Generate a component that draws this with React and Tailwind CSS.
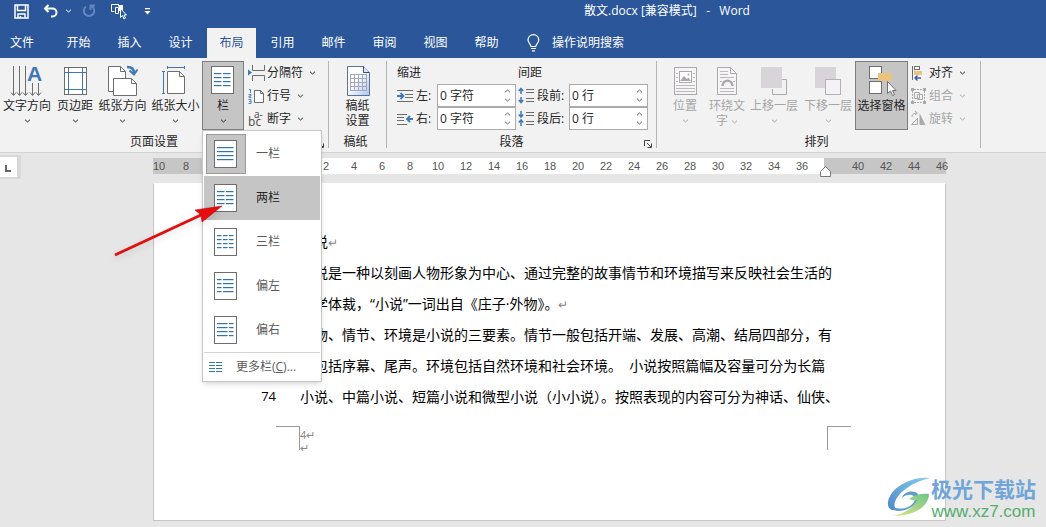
const TABS = ['开始', '插入', '设计', '布局', '引用', '邮件', '审阅', '视图', '帮助'];

const LINES = [
  '小说↵',
  '小说是一种以刻画人物形象为中心、通过完整的故事情节和环境描写来反映社会生活的',
  '文学体裁，“小说”一词出自《庄子·外物》。↵',
  '人物、情节、环境是小说的三要素。情节一般包括开端、发展、高潮、结局四部分，有',
  '时包括序幕、尾声。环境包括自然环境和社会环境。  小说按照篇幅及容量可分为长篇',
  '小说、中篇小说、短篇小说和微型小说（小小说）。按照表现的内容可分为神话、仙侠、',
];

const LAYOUTS = [
  {label: '一栏', cols: [[3, 20]]},
  {label: '两栏', cols: [[3, 11], [12, 20]]},
  {label: '三栏', cols: [[3, 8], [9, 14], [15, 20]]},
  {label: '偏左', cols: [[3, 8], [9, 20]]},
  {label: '偏右', cols: [[3, 14], [15, 20]]},
];

function Chevron({className = ''}) {
  return (
    <svg width="7" height="4" viewBox="0 0 7 4" className={`shrink-0 ${className}`} fill="none" stroke="currentColor">
      <path d="M1 .7 3.5 3 6 .7" />
    </svg>
  );
}

function PageIcon({cols}) {
  return (
    <svg width="24" height="28" viewBox="0 0 24 28" className="shrink-0">
      <rect x=".5" y=".5" width="22" height="27" fill="#fff" stroke="#6d6d6d" />
      {[7, 11, 15, 19].map((y) => cols.map(([a, b]) => (
        <rect key={`${a}-${y}`} x={a} y={y} width={b - a - 0.5} height="1.2" fill="#2e75b6" />
      )))}
    </svg>
  );
}

function Icon({w = 32, h = 32, children}) {
  return (
    <svg width={w} height={h} viewBox={`0 0 ${w} ${h}`} fill="none" stroke="#6d6d6d" className="shrink-0 overflow-visible">
      {children}
    </svg>
  );
}

const TextDirectionIcon = () => (
  <Icon w={34}>
    {[3.5, 9.5, 15.5].map((x) => <path key={x} d={`M${x} 1V30M${x - 2.5} 27.5l2.5 3 2.5-3`} />)}
    {[22.5, 28.5].map((x) => <path key={x} d={`M${x} 18V30M${x - 2.5} 27.5l2.5 3 2.5-3`} />)}
    <text x="17" y="16" fontSize="21" fontWeight="700" fontFamily="Liberation Sans, sans-serif" fill="#3f78b5" stroke="none">A</text>
  </Icon>
);

const MarginsIcon = () => (
  <Icon>
    <rect x="5.5" y="2.5" width="22" height="27" fill="#fff" />
    <path d="M9.5 3v26M23.5 3v26M6 7.5h21M6 24.5h21" stroke="#3f78b5" />
  </Icon>
);

const OrientationIcon = () => (
  <Icon>
    <path d="M1.5 1.5h12l5 5v20h-17z" fill="#fff" />
    <path d="M13.5 1.5v5h5" />
    <path d="M6.5 13.5h18l5 5v12h-23z" fill="#fff" />
    <path d="M24.5 13.5v5h5" />
    <path d="M20 2c5 0 7 2 7 6" stroke="#3f78b5" strokeWidth="2.5" />
    <path d="M22.5 5.5 27 9.5l3.5-5" stroke="#3f78b5" strokeWidth="2" />
  </Icon>
);

const SizeIcon = () => (
  <Icon>
    <path d="M7.5 6.5h12l5 5v17h-17z" fill="#fff" />
    <path d="M19.5 6.5v5h5" />
    <path d="M7 2.5h18M7.5 1v3M24.5 1v3M3.5 6v22M2 6.5h3M2 28.5h3" stroke="#3f78b5" />
  </Icon>
);

const ManuscriptIcon = () => (
  <Icon>
    <defs>
      <linearGradient id="sheet" x1="0" y1="0" x2="1" y2="1">
        <stop offset=".4" stopColor="#fff" />
        <stop offset="1" stopColor="#a9c3ec" />
      </linearGradient>
    </defs>
    <path d="M5.5 1.5h16l6 6v23h-22z" fill="url(#sheet)" stroke="#5d7096" />
    <path d="M21.5 1.5v6h6" fill="#dce7f8" stroke="#38527f" />
    <path
      d="M8 9.500h16M8 13.500h16M8 17.500h16M8 21.500h16M8 25.500h16M8.500 9v17M12.500 9v17M16.500 9v17M20.500 9v17M24.500 9v17"
      stroke="#a3a9ba"
    />
  </Icon>
);

const PositionIcon = () => (
  <Icon>
    <rect x="5.5" y="2.5" width="22" height="27" stroke="#aaa" fill="#f6f4f7" />
    <rect x="10.5" y="6.5" width="12" height="11" stroke="#aaa" fill="#fff" />
    <path d="M11 16l4-5 3 3 1.500-1.500L22 16z" fill="#aaa" stroke="none" />
    <path d="M7 8.500h2M7 12.500h2M7 16.500h2M24 8.500h2M24 12.500h2M24 16.500h2M7 20.500h19M7 23.500h19M7 26.500h19" stroke="#bbb" />
    <circle cx="19.5" cy="9.5" r="1" fill="#aaa" stroke="none" />
  </Icon>
);

const WrapIcon = () => (
  <Icon>
    <path d="M6.5 2.5h13l6 6v21h-19z" stroke="#aaa" fill="#f6f4f7" />
    <path d="M19.5 2.5v6h6" stroke="#aaa" />
    <path d="M9 6.500h8M9 9.500h8M9 12.500h14M9 23.500h14M9 26.500h14M9 16.500h2M22 16.500h2" stroke="#bbb" />
    <path d="M11.5 21c0-7 10-7 10 0" stroke="#aaa" strokeWidth="2.5" />
  </Icon>
);

const ForwardIcon = () => (
  <Icon>
    <path d="M14.5 24v5.500h14v-15H24" stroke="#aaa" />
    <rect x="3" y="2" width="21" height="21" fill="#d9d4d9" stroke="none" />
  </Icon>
);

const BackwardIcon = () => (
  <Icon>
    <rect x="3" y="2" width="21" height="21" fill="#d9d4d9" stroke="none" />
    <rect x="13.5" y="14.5" width="15" height="15" fill="#f6f1f8" stroke="#b5b0b5" />
  </Icon>
);

const SelectionIcon = () => (
  <Icon>
    <rect x="3.5" y="1.5" width="12" height="12" fill="#fff" />
    <rect x="3.5" y="16.5" width="12" height="12" fill="#fff" />
    <rect x="12" y="8" width="14" height="8" fill="#eac47e" stroke="none" />
    <path d="M21.5 16.5v12l3-2.500 2 4.500 2-1-2-4h3.500z" fill="#fff" />
  </Icon>
);

const BreaksIcon = () => (
  <Icon w={17} h={16}>
    <path d="M4.5 0v5.500h12V0M4.500 16v-5.500h12V16" />
    <path d="M0 4.500v6L4 7.500z" fill="#3f78b5" stroke="none" />
  </Icon>
);

const LineNumberIcon = () => (
  <Icon w={17} h={16}>
    <path d="M6.5 2.500h6l3 3v9h-9z" fill="#fff" />
    <path d="M12.5 2.500v3h3" />
    <g fill="#3f78b5" stroke="#3f78b5">
      <path d="M1 1.500h1.500V5M.5 6.500h2.500v1.500H1v1.500h2.500M.5 11.500H3v4H.5M1 13.500h2" fill="none" strokeWidth=".9" />
    </g>
  </Icon>
);

const HyphenIcon = () => (
  <Icon w={17} h={16}>
    <g fontFamily="Noto Sans, sans-serif" fill="#555" stroke="none">
      <text x="0" y="15" fontSize="12">bc</text>
      <text x="6" y="7" fontSize="10">a-</text>
    </g>
  </Icon>
);

const IndentLeftIcon = () => (
  <Icon w={17} h={14}>
    <path d="M0 1.500h16M8 5.500h8M8 8.500h8M0 12.500h16" />
    <path d="M0 7h6M3.500 4l3 3-3 3" stroke="#3f78b5" strokeWidth="1.8" />
  </Icon>
);

const IndentRightIcon = () => (
  <Icon w={17} h={14}>
    <path d="M0 2.500h10M0 5.500h7M0 8.500h7M0 12.500h10" />
    <path d="M10 7h6M13 4l-3 3 3 3" stroke="#3f78b5" strokeWidth="1.8" />
  </Icon>
);

const BeforeIcon = () => (
  <Icon w={17} h={17}>
    <path d="M8 2.500h8M8 5.500h8M8 11.500h8M8 14.500h8" />
    <path d="M3 7V1.500M.8 4 3 1.500 5.200 4M3 10v5.500M.8 13 3 15.500 5.200 13" stroke="#3f78b5" strokeWidth="1.5" />
  </Icon>
);

const AfterIcon = () => (
  <Icon w={17} h={17}>
    <path d="M8 2.500h8M8 5.500h8M8 11.500h8M8 14.500h8" />
    <path d="M3 1v5.500M.8 4.500 3 7l2.200-2.500M3 16v-5.500M.8 12.500 3 10l2.200 2.500" stroke="#3f78b5" strokeWidth="1.5" />
  </Icon>
);

const AlignIcon = () => (
  <Icon w={17} h={16}>
    <path d="M2.5 1v14" />
    <rect x="4.5" y="1.5" width="5" height="3" fill="#fff" />
    <rect x="4" y="6" width="8" height="4" fill="#eac47e" stroke="none" />
    <path d="M5 13h6M7.500 10.500 5 13l2.500 2.500" stroke="#3f5fb5" strokeWidth="1.5" />
  </Icon>
);

const GroupIcon = () => (
  <Icon w={17} h={16}>
    <path d="M2.5 3v10M14.500 3v10M4 1.500h9M4 14.500h9" stroke="#aaa" strokeDasharray="2 1" />
    <path d="M4.5 4.500h5v6h-5zM7.500 6.500h5v5h-5z" stroke="#aaa" />
    <path d="M1 0h3v3H1zM13 0h3v3h-3zM1 13h3v3H1zM13 13h3v3h-3z" fill="#aaa" stroke="none" />
  </Icon>
);

const RotateIcon = () => (
  <Icon w={17} h={16}>
    <path d="M1.5 13.500h6v-6zM2 6c0-3 2-4 5-4M5 0l2.500 2L5 4" stroke="#aaa" />
    <path d="M9.5 2v12h6z" fill="#aaa" stroke="none" />
  </Icon>
);

function BigButton({icon, label, width, arrow = true, disabled, active, children}) {
  return (
    <div className={`relative ${width}`}>
      <button
        disabled={disabled}
        className={`flex h-[69px] w-full flex-col items-center pt-1 leading-[15px] whitespace-nowrap ${
          active ? 'bg-[#c5c5c5] outline outline-1 -outline-offset-1 outline-[#7d7d7d]' : ''
        } ${disabled ? 'text-[#a6a6a6]' : 'text-[#262626]'}`}
      >
        {icon}
        <span className="mt-px">{label}</span>
        {arrow && <Chevron className="mt-1.5" />}
      </button>
      {children}
    </div>
  );
}

function SmallButton({icon, label, disabled}) {
  return (
    <button
      disabled={disabled}
      className={`flex h-[23px] items-center gap-0.5 whitespace-nowrap ${disabled ? 'text-[#a6a6a6]' : 'text-[#262626]'}`}
    >
      {icon}
      <span>{label}</span>
      <Chevron className="ml-1" />
    </button>
  );
}

function Group({label, width, launcher, children}) {
  return (
    <section className={`flex shrink-0 flex-col border-r border-[#b5b5b5] ${width}`}>
      <div className="flex">{children}</div>
      <div className="flex h-5 items-center pr-1 pt-1">
        <span className="flex-1 text-center">{label}</span>
        {launcher && (
          <button aria-label={`${label}选项`} className="flex w-4 justify-end pt-1">
            <svg width="8" height="8" viewBox="0 0 8 8" fill="none" stroke="#444">
              <path d="M.5 6V.5H6M3 3l4 4M7.500 3.500v4h-4" />
            </svg>
          </button>
        )}
      </div>
    </section>
  );
}

function Spinner({id, icon, label, value, labelWidth}) {
  return (
    <div className="flex h-[23px] items-center">
      {icon}
      <label htmlFor={id} className={`pl-0.5 whitespace-nowrap ${labelWidth}`}>{label}</label>
      <div className="flex h-[23px] w-[79px] border border-[#ababab] bg-white">
        <input id={id} defaultValue={value} className="w-0 min-w-0 flex-1 pl-0.5 outline-none" />
        <div className="flex w-4 flex-col items-center justify-between py-1 text-[#666]">
          <button aria-label={`${label}增加`}><Chevron className="rotate-180" /></button>
          <button aria-label={`${label}减少`}><Chevron /></button>
        </div>
      </div>
    </div>
  );
}

function ColumnsMenu() {
  return (
    <div className="absolute left-0 top-[69px] z-20 w-[120px] border border-[#c6c6c6] bg-white p-px text-[#5a5a5a] shadow-md">
      {LAYOUTS.map(({label, cols}) => (
        <button
          key={label}
          className={`flex h-11 w-full items-center gap-2.5 pl-0.5 ${label === '两栏' ? 'bg-[#c5c5c5] text-[#262626]' : ''}`}
        >
          <span
            className={`flex h-10 w-10 items-center justify-center border ${
              label === '一栏' ? 'border-[#9a9a9a] bg-[#c5c5c5]' : 'border-transparent'
            }`}
          >
            <PageIcon cols={cols} />
          </span>
          <span>{label}</span>
        </button>
      ))}
      <button className="flex h-7 w-full items-center gap-3 border-t border-[#d4d4d4] pl-1 whitespace-nowrap">
        <svg width="16" height="12" viewBox="0 0 16 12" stroke="#2e75b6" className="shrink-0">
          <path d="M1 1.500h6M8 1.500h6M1 4.500h6M8 4.500h6M1 7.500h6M8 7.500h6M1 10.500h6M8 10.500h6" />
        </svg>
        <span>更多栏(<u>C</u>)...</span>
      </button>
    </div>
  );
}

function TitleBar() {
  return (
    <header className="flex h-7 items-center pb-1.5 text-white">
      <div className="flex w-[160px] items-center pl-3.5">
        <button aria-label="保存">
          <svg width="15" height="15" viewBox="0 0 15 15" fill="none" stroke="currentColor" strokeWidth="1.5">
            <path d="M1 1h13v13H1zM3.500 1v5.500h8V1M4 14v-4h7v4M6.500 14v-2" />
          </svg>
        </button>
        <button aria-label="撤消" className="ml-3.5">
          <svg width="16" height="14" viewBox="0 0 16 14" fill="none" stroke="currentColor" strokeWidth="2">
            <path d="M5.500 1 2 4.500 5.500 8M2 4.500h7.500a4 4 0 0 1 0 8H8" />
          </svg>
        </button>
        <Chevron className="ml-1.5" />
        <button aria-label="重复" className="ml-2.5 text-[#6585bd]">
          <svg width="14" height="14" viewBox="0 0 14 14" fill="none" stroke="currentColor" strokeWidth="2">
            <path d="M4 2.500a5.200 5.200 0 1 0 6 0M8.500 6V1.500H13" />
          </svg>
        </button>
        <button aria-label="选择对象" className="ml-3.5">
          <svg width="18" height="17" viewBox="0 0 18 17" fill="none" stroke="currentColor">
            <path d="M4.500 8.500h-3v-7h7v2M5.500 4.500h3v6h-3z" />
            <path d="M9 2h4v6H9z" fill="currentColor" stroke="none" />
            <path d="M10.500 5.500v9l2-2 1.500 3.500 1.500-1-1.500-3h2.500z" fill="#2b579a" />
          </svg>
        </button>
        <button aria-label="自定义快速访问工具栏" className="ml-4">
          <svg width="7" height="7" viewBox="0 0 7 7" fill="currentColor">
            <path d="M1 0h5v1.200H1zM.5 3h6L3.500 6.500z" />
          </svg>
        </button>
      </div>
      <h1 className="flex-1 pl-37 text-center text-xs whitespace-pre">散文.docx [兼容模式]   -   Word</h1>
      <div className="w-5" />
    </header>
  );
}

function Ribbon() {
  return (
    <div className="flex h-[95px] border-b border-[#d2d2d2] bg-[#f2f2f2] pt-[3px] pb-1">
      <Group label="页面设置" width="w-[329px]" launcher>
        <BigButton width="w-[54px]" icon={<TextDirectionIcon />} label="文字方向" />
        <BigButton width="w-[42px]" icon={<MarginsIcon />} label="页边距" />
        <BigButton width="w-[53px]" icon={<OrientationIcon />} label="纸张方向" />
        <BigButton width="w-[53px]" icon={<SizeIcon />} label="纸张大小" />
        <BigButton
          width="w-[42px]"
          active
          icon={<span className="flex h-8 items-center pb-0.5"><PageIcon cols={LAYOUTS[1].cols} /></span>}
          label="栏"
        >
          <ColumnsMenu />
        </BigButton>
        <div className="pl-1">
          <SmallButton icon={<BreaksIcon />} label="分隔符" />
          <SmallButton icon={<LineNumberIcon />} label="行号" />
          <SmallButton icon={<HyphenIcon />} label="断字" />
        </div>
      </Group>
      <Group label="稿纸" width="w-[58px]">
        <BigButton width="w-full" arrow={false} icon={<ManuscriptIcon />} label={<>稿纸<br />设置</>} />
      </Group>
      <Group label="段落" width="w-[270px]" launcher>
        <div className="flex gap-0.5 pl-2.5">
          <div>
            <div className="flex h-[23px] items-center">缩进</div>
            <Spinner id="indent-left" icon={<IndentLeftIcon />} label="左:" value="0 字符" labelWidth="w-[23px]" />
            <Spinner id="indent-right" icon={<IndentRightIcon />} label="右:" value="0 字符" labelWidth="w-[23px]" />
          </div>
          <div>
            <div className="flex h-[23px] items-center">间距</div>
            <Spinner id="space-before" icon={<BeforeIcon />} label="段前:" value="0 行" labelWidth="w-[34px]" />
            <Spinner id="space-after" icon={<AfterIcon />} label="段后:" value="0 行" labelWidth="w-[34px]" />
          </div>
        </div>
      </Group>
      <Group label="排列" width="w-[324px]">
        <div className="flex pl-1.5">
          <BigButton width="w-[44px]" disabled icon={<PositionIcon />} label="位置" />
          <BigButton
            width="w-[40px]"
            disabled
            arrow={false}
            icon={<WrapIcon />}
            label={<>环绕文<br />字 <Chevron className="inline" /></>}
          />
          <BigButton width="w-[54px]" disabled icon={<ForwardIcon />} label="上移一层" />
          <BigButton width="w-[54px]" disabled icon={<BackwardIcon />} label="下移一层" />
          <BigButton width="w-[53px]" active arrow={false} icon={<SelectionIcon />} label="选择窗格" />
          <div className="pl-0.5">
            <SmallButton icon={<AlignIcon />} label="对齐" />
            <SmallButton disabled icon={<GroupIcon />} label="组合" />
            <SmallButton disabled icon={<RotateIcon />} label="旋转" />
          </div>
        </div>
      </Group>
    </div>
  );
}

function Tick({n}) {
  return <span className="w-7 shrink-0 text-center">{n}</span>;
}

function Ruler() {
  return (
    <div className="flex h-[30px] items-start">
      <div className="mt-0.5 h-6 w-[21px] border-y-2 border-r-4 border-[#d8d8d8] bg-white">
        <svg width="16" height="20" viewBox="0 0 16 20" fill="none" stroke="#666" strokeWidth="2">
          <path d="M6 8v6h5" />
        </svg>
      </div>
      <div className="mr-[100px] ml-[132px] mt-[5px] flex h-4 flex-1 bg-[#c6c6c6] font-['Liberation_Sans',sans-serif] text-[11px] leading-4 text-[#555]">
        <div className="flex w-[147px] shrink-0">
          <span className="w-[19px]">10</span>
          {[8, 6, 4, 2].map((n) => <Tick key={n} n={n} />)}
        </div>
        <div className="flex flex-1 bg-white pl-3">
          {Array.from({length: 18}, (_, i) => <Tick key={i} n={i * 2 + 2} />)}
        </div>
        <div className="relative flex w-[122px] shrink-0 pl-5">
          {[40, 42, 44, 46].map((n) => <Tick key={n} n={n} />)}
          <svg width="12" height="11" viewBox="0 0 12 11" className="absolute -left-1 top-2" fill="#fff" stroke="#777">
            <path d="M.5 10.500V5.500L5.500.5l5 5v5z" />
          </svg>
        </div>
      </div>
    </div>
  );
}

function DocumentPage() {
  return (
    <article className="mr-[100px] mb-1.5 ml-[153px] flex-1 border border-[#c6c6c6] border-t-transparent bg-white pt-[42px] text-black">
      {LINES.map((line, i) => {
        const text = line.replace('↵', '');
        return (
          <div key={i} className="flex text-sm leading-[31px] whitespace-nowrap">
            <span className="w-[146px] pr-6 text-right font-['Open_Sans',sans-serif] text-[13px]">
              {i === LINES.length - 1 ? '74' : ''}
            </span>
            <p className="whitespace-pre">
              {text}
              {text !== line && <span className="text-xs text-[#888]">↵</span>}
            </p>
          </div>
        );
      })}
      <footer className="mt-3.5 flex justify-between pr-[94px] pl-[122px] text-[#888]">
        <div className="flex">
          <div className="h-6 w-6 border-t border-r border-[#999]" />
          <div className="pt-0.5 text-[11px] leading-[13px]">
            <p>4↵</p>
            <p>↵</p>
          </div>
        </div>
        <div className="h-6 w-6 border-t border-l border-[#999]" />
      </footer>
    </article>
  );
}

function Watermark() {
  return (
    <div className="absolute right-2.5 bottom-1.5 flex items-center">
      <svg width="44" height="42" viewBox="0 0 44 42" opacity=".9">
        <defs>
          <linearGradient id="swirl" x1="0" y1="1" x2="1" y2="0">
            <stop offset="0" stopColor="#3c7cc0" />
            <stop offset="1" stopColor="#7cc8ee" />
          </linearGradient>
          <linearGradient id="leaf" x1="0" y1="1" x2="1" y2="0">
            <stop offset="0" stopColor="#dfe27a" />
            <stop offset="1" stopColor="#5fbf7d" />
          </linearGradient>
        </defs>
        <path d="M43 1C24-1 3 11 1 25c-1 6 3 9 8 8C5 28 9 18 20 11c7-5 14-8 23-10z" fill="url(#swirl)" />
        <path d="M7 30c7 4 20 0 21-8 0-5-8-6-13-1 1-6 12-9 16-4 4 7-8 17-20 17-3 0-5-2-4-4z" fill="#4c8fce" />
        <path d="M42 17c0 12-14 22-36 22 12-3 20-8 24-16-3 1-5 0-8-1 5-4 12-6 20-5z" fill="url(#leaf)" />
      </svg>
      <div className="text-center">
        <p className="text-[21px] leading-[28px] font-bold text-[#70a5d9]">极光下载站</p>
        <p className="font-['Liberation_Sans',sans-serif] text-[17px] leading-[18px] text-[#55ad6e]">www.xz7.com</p>
      </div>
    </div>
  );
}

export default function App() {
  return (
    <div className="relative flex min-h-screen flex-col overflow-hidden bg-[#e6e6e6] font-['Open_Sans','Noto_Sans_CJK_SC',sans-serif] text-xs text-[#262626]">
      <div className="bg-[#2b579a]">
        <TitleBar />
        <nav className="flex h-[30px] items-stretch gap-0.5 text-white">
          <button className="mr-2 w-[44px]">文件</button>
          {TABS.map((tab) => (
            <button key={tab} className={`w-[49px] ${tab === '布局' ? 'bg-[#f2f2f2] text-[#2b579a]' : ''}`}>{tab}</button>
          ))}
          <button className="ml-3.5 flex items-center gap-3">
            <svg width="13" height="18" viewBox="0 0 13 18" fill="none" stroke="currentColor" strokeWidth="1.2">
              <path d="M4 12.500c0-2.500-3-3.500-3-6.500a5.300 5.300 0 0 1 10.800 0c0 3-3 4-3 6.500zM4 14.500h5M5 16.800h3" />
            </svg>
            <span>操作说明搜索</span>
          </button>
        </nav>
      </div>
      <Ribbon />
      <Ruler />
      <DocumentPage />
      <svg width="114" height="58" viewBox="0 0 114 58" className="absolute top-[202px] left-[112px] z-30 drop-shadow-md">
        <path d="M3 53 89 13" stroke="#e01010" strokeWidth="3" />
        <path d="M110 4 83 8l6 5 1 7z" fill="#e80c0c" stroke="#b00000" strokeWidth=".5" />
      </svg>
      <Watermark />
    </div>
  );
}
